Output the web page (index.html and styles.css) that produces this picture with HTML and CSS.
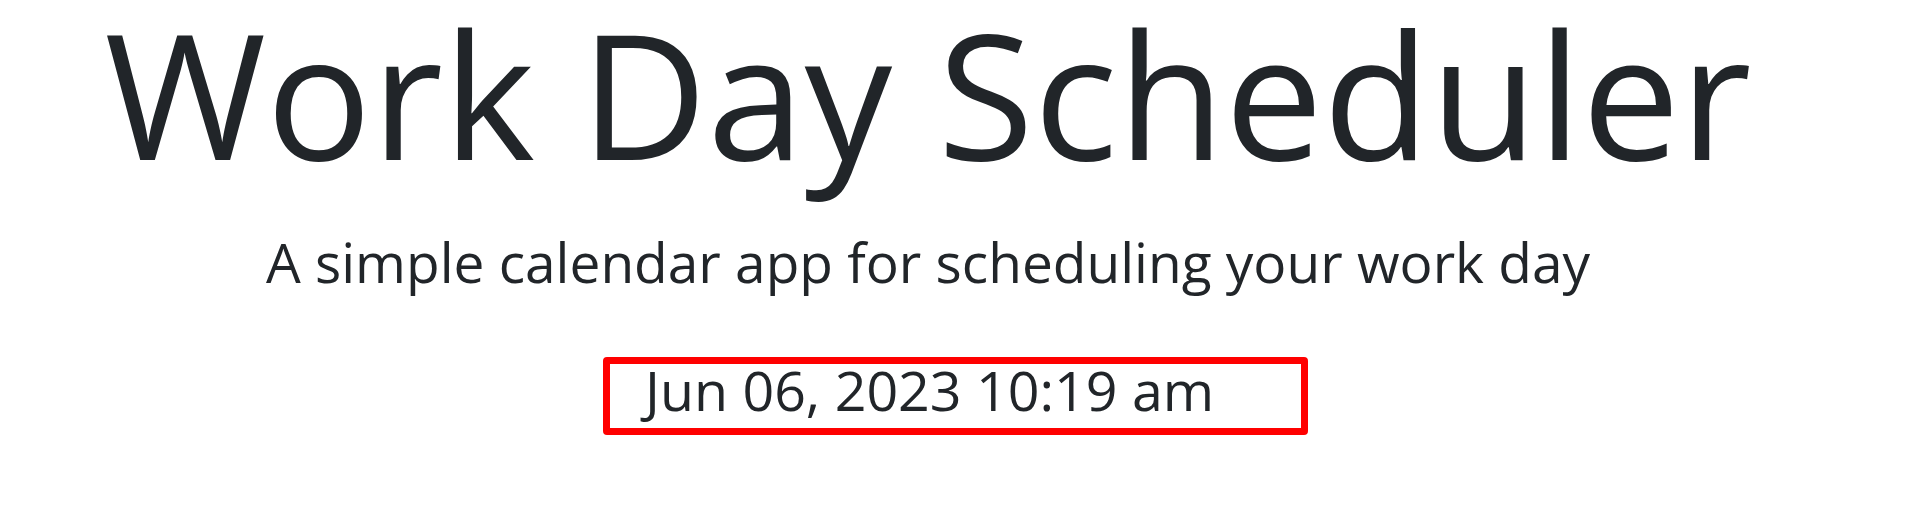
FILE: index.html
```html
<!DOCTYPE html>
<html lang="en">
<head>
<meta charset="utf-8">
<title>Work Day Scheduler</title>
<link rel="stylesheet" href="styles.css">
</head>
<body>
<header class="jumbotron">
  <h1 class="title">Work Day Scheduler</h1>
  <p class="lead">A simple calendar app for scheduling your work day</p>
  <p class="current-day">Jun 06, 2023 10:19 am</p>
</header>
</body>
</html>
```
FILE: styles.css
```css
html, body {
  margin: 0;
  padding: 0;
  background: #ffffff;
}
body {
  font-family: "Open Sans", "Liberation Sans", sans-serif;
  color: #212529;
}
.jumbotron {
  display: flex;
  flex-direction: column;
  align-items: center;
  padding-right: 71px;
  text-align: center;
}
.title {
  margin: 0;
  padding-top: 18px;
  font-size: 175px;
  font-weight: 400;
  line-height: 148px;
  white-space: nowrap;
}
.lead {
  margin: 68px 0 0 0;
  font-size: 55px;
  font-weight: 400;
  line-height: 55px;
  white-space: nowrap;
}
.current-day {
  box-sizing: border-box;
  margin: 68px 0 0 55px;
  width: 705px;
  height: 78px;
  border: 7px solid #ff0000;
  border-radius: 4px;
  padding: 0 0 0 35px;
  font-size: 55.5px;
  line-height: 52px;
  text-align: left;
  white-space: nowrap;
}
```
